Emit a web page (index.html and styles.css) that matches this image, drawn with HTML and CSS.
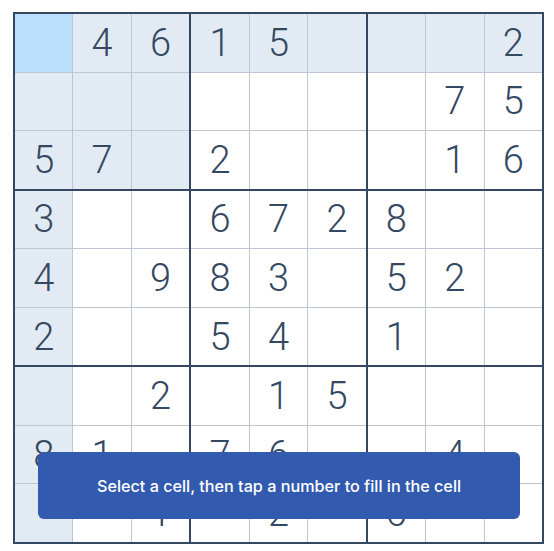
FILE: index.html
```html
<!DOCTYPE html>
<html>
<head>
<meta charset="utf-8">
<link rel="stylesheet" href="styles.css">
</head>
<body>
<div class="page">
  <div class="board">
    <div class="box">
      <div class="cell sel"></div><div class="cell hl">4</div><div class="cell hl">6</div>
      <div class="cell hl"></div><div class="cell hl"></div><div class="cell hl"></div>
      <div class="cell hl">5</div><div class="cell hl">7</div><div class="cell hl"></div>
    </div>
    <div class="box">
      <div class="cell hl">1</div><div class="cell hl">5</div><div class="cell hl"></div>
      <div class="cell"></div><div class="cell"></div><div class="cell"></div>
      <div class="cell">2</div><div class="cell"></div><div class="cell"></div>
    </div>
    <div class="box">
      <div class="cell hl"></div><div class="cell hl"></div><div class="cell hl">2</div>
      <div class="cell"></div><div class="cell">7</div><div class="cell">5</div>
      <div class="cell"></div><div class="cell">1</div><div class="cell">6</div>
    </div>
    <div class="box">
      <div class="cell hl">3</div><div class="cell"></div><div class="cell"></div>
      <div class="cell hl">4</div><div class="cell"></div><div class="cell">9</div>
      <div class="cell hl">2</div><div class="cell"></div><div class="cell"></div>
    </div>
    <div class="box">
      <div class="cell">6</div><div class="cell">7</div><div class="cell">2</div>
      <div class="cell">8</div><div class="cell">3</div><div class="cell"></div>
      <div class="cell">5</div><div class="cell">4</div><div class="cell"></div>
    </div>
    <div class="box">
      <div class="cell">8</div><div class="cell"></div><div class="cell"></div>
      <div class="cell">5</div><div class="cell">2</div><div class="cell"></div>
      <div class="cell">1</div><div class="cell"></div><div class="cell"></div>
    </div>
    <div class="box">
      <div class="cell hl"></div><div class="cell"></div><div class="cell">2</div>
      <div class="cell hl">8</div><div class="cell">1</div><div class="cell"></div>
      <div class="cell hl"></div><div class="cell"></div><div class="cell">1</div>
    </div>
    <div class="box">
      <div class="cell"></div><div class="cell">1</div><div class="cell">5</div>
      <div class="cell">7</div><div class="cell">6</div><div class="cell"></div>
      <div class="cell"></div><div class="cell">2</div><div class="cell"></div>
    </div>
    <div class="box">
      <div class="cell"></div><div class="cell"></div><div class="cell"></div>
      <div class="cell"></div><div class="cell">4</div><div class="cell"></div>
      <div class="cell">6</div><div class="cell"></div><div class="cell"></div>
    </div>
    <div class="toast">Select a cell, then tap a number to fill in the cell</div>
  </div>
</div>
</body>
</html>
```
FILE: styles.css
```css
* { box-sizing: border-box; }
html, body { margin: 0; padding: 0; background: #fff; }
.page {
  padding: 12px 0 0 13px;
}
.board {
  position: relative;
  width: 531px;
  height: 532px;
  border: 2px solid #344861;
  background: #344861;
  display: grid;
  grid-template-columns: repeat(3, 1fr);
  grid-template-rows: repeat(3, 1fr);
  gap: 2px;
}
.box {
  display: grid;
  grid-template-columns: repeat(3, 1fr);
  grid-template-rows: repeat(3, 1fr);
  gap: 1px;
  background: #bec6d4;
}
.cell {
  background: #fff;
  color: #344861;
  font-family: Roboto, "Liberation Sans", sans-serif;
  font-weight: 300;
  font-size: 38px;
  display: flex;
  align-items: center;
  justify-content: center;
  line-height: 1;
}
.cell.hl { background: #e2ebf3; }
.cell.sel { background: #bbdefb; }
.toast {
  position: absolute;
  left: 23px;
  top: 438px;
  width: 482px;
  height: 67px;
  background: #325aaf;
  border-radius: 6px;
  color: #fff;
  font-family: Inter, "Noto Sans", sans-serif;
  font-weight: 500;
  font-size: 16.2px;
  display: flex;
  align-items: center;
  justify-content: center;
}
```
